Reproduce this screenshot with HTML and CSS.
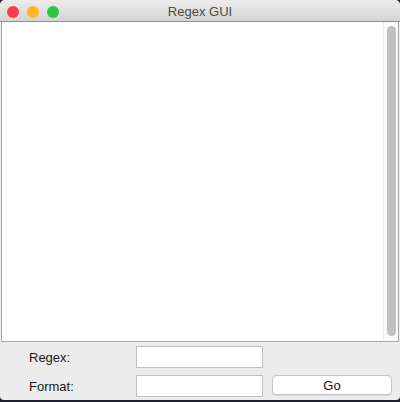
FILE: index.html
```html
<!DOCTYPE html>
<html>
<head>
<meta charset="utf-8">
<link rel="stylesheet" href="styles.css">
</head>
<body>
<div class="window">
  <div class="titlebar">
    <div class="lights">
      <span class="light red"></span>
      <span class="light yellow"></span>
      <span class="light green"></span>
    </div>
    <div class="title">Regex GUI</div>
  </div>
  <div class="output">
    <div class="text"></div>
    <div class="scrollbar"><div class="thumb"></div></div>
  </div>
  <div class="form">
    <label class="label">Regex:</label>
    <div class="field"></div>
    <div></div>
    <label class="label">Format:</label>
    <div class="field"></div>
    <button class="go">Go</button>
  </div>
</div>
</body>
</html>
```
FILE: styles.css
```css
html, body {
  margin: 0;
  padding: 0;
  background: #1c2230;
  width: 400px;
  height: 402px;
  overflow: hidden;
  font-family: "Liberation Sans", Arial, sans-serif;
}
.window {
  width: 400px;
  height: 400px;
  background: #ececec;
  border-radius: 5px 5px 4px 4px;
  overflow: hidden;
  display: flex;
  flex-direction: column;
}
.titlebar {
  height: 21px;
  border-bottom: 1px solid #8e8e8e;
  background: linear-gradient(#ececec, #d4d4d4);
  position: relative;
  display: flex;
  align-items: center;
  justify-content: center;
}
.lights {
  position: absolute;
  left: 7px;
  top: 6px;
  display: flex;
  gap: 8px;
}
.light {
  width: 12px;
  height: 12px;
  border-radius: 50%;
  display: block;
}
.red { background: #fc3d48; }
.yellow { background: #fdb624; }
.green { background: #2ac840; }
.title {
  font-size: 13px;
  color: #4b4b4b;
  padding-top: 2px;
}
.output {
  height: 319px;
  margin: 0 1px;
  border: 1px solid #a8a8a8;
  border-top: none;
  background: #fff;
  display: flex;
}
.text { flex: 1; }
.scrollbar {
  background: #fafafa;
  border-left: 1px solid #ececec;
  padding: 4px 1px 5px 3px;
  box-sizing: border-box;
  width: 15px;
}
.thumb {
  width: 9px;
  height: 100%;
  background: #c1c1c1;
  border-radius: 5px;
}
.form {
  display: grid;
  grid-template-columns: 98px 127px 120px;
  grid-template-rows: 22px 22px;
  column-gap: 9px;
  row-gap: 7px;
  padding: 4px 0 0 29px;
  align-items: center;
}
.label {
  font-size: 13px;
  color: #1a1a1a;
}
.field {
  height: 22px;
  box-sizing: border-box;
  background: #fff;
  border: 1px solid #c0c0c0;
}
.go {
  align-self: start;
  height: 20px;
  margin: 0;
  padding: 0;
  background: #fff;
  border: 1px solid #c6c6c6;
  border-radius: 4px;
  box-shadow: 0 1px 0 #d8d8d8;
  font-family: "Liberation Sans", Arial, sans-serif;
  font-size: 13px;
  color: #111;
}
```
